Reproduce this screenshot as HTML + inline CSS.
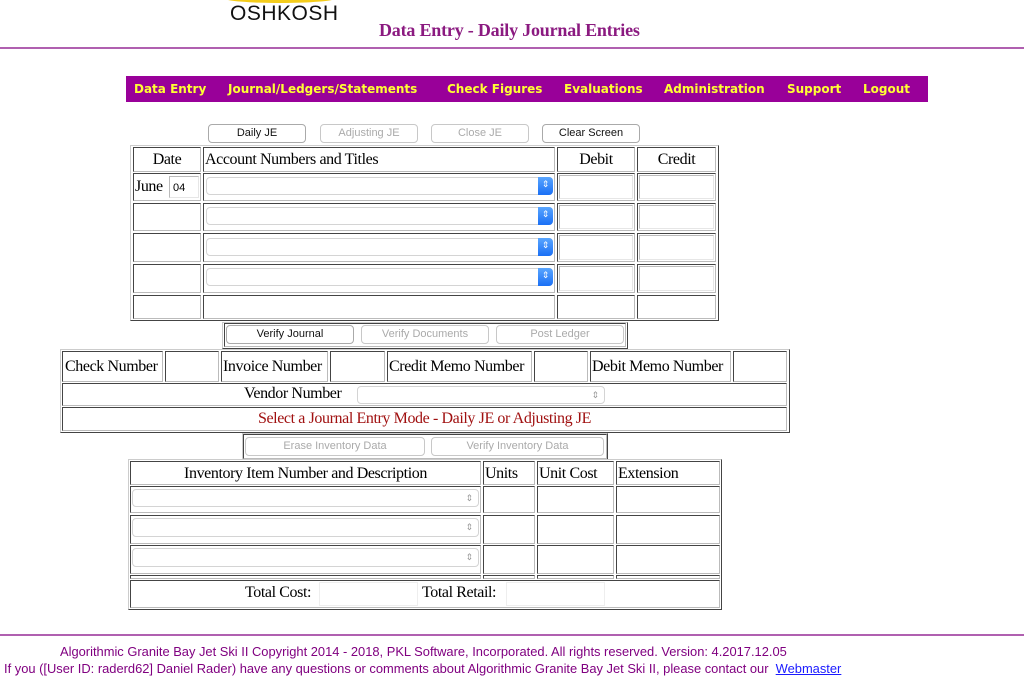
<!DOCTYPE html>
<html><head><meta charset="utf-8"><style>
body{margin:0;width:1024px;height:700px;background:#fff;position:relative;overflow:hidden;font-family:"Liberation Serif",serif;}
div{box-sizing:border-box;}
.a{position:absolute;white-space:nowrap;}
.c{position:absolute;border:1px solid;border-color:#444 #bbb #bbb #444;font-size:16px;color:#000;line-height:1;white-space:nowrap;letter-spacing:-0.4px;}
.o{position:absolute;border:1px solid;border-color:#ccc #444 #444 #ccc;}
.in{position:absolute;border:1px solid;border-color:#bbb #e6e6e6 #e6e6e6 #bbb;background:#fff;}
.btn{position:absolute;border:1px solid #c8c8c8;border-radius:4px;background:#fff;font-family:"Liberation Sans",sans-serif;font-size:11px;text-align:center;color:#aaa;line-height:17px;}
.btn.on{color:#111;border-color:#aaa;}
.sel{position:absolute;border:1px solid #d4d4d4;border-radius:4px;background:#fff;}
.blue{position:absolute;right:-1px;top:-1px;bottom:-1px;width:15px;border-radius:0 4px 4px 0;background:linear-gradient(#5aa6ff,#1a6ff5);color:#fff;font-size:9px;text-align:center;line-height:17px;font-family:"DejaVu Sans",sans-serif;}
.ch{position:absolute;right:5px;top:0;color:#999;font-size:9px;font-family:"DejaVu Sans",sans-serif;line-height:18px;}
.nav span{position:absolute;top:6px;color:#ffff33;font-weight:bold;font-family:"DejaVu Sans",sans-serif;font-size:12px;white-space:nowrap;}
</style></head><body>
<div class="a" style="left:225px;top:-6px;width:110px;height:9px;border-radius:50%;border-bottom:3px solid #f4cc1a;"></div>
<div class="a" style="left:230px;top:2px;font-family:'Liberation Sans',sans-serif;font-size:21px;color:#111;letter-spacing:0.5px;">OSHKOSH</div>
<div class="a" style="left:379px;top:20px;font-size:18px;font-weight:bold;color:#8b1a80;letter-spacing:-0.2px;">Data Entry - Daily Journal Entries</div>
<div class="a" style="left:0;top:47px;width:1024px;height:2px;background:#b060b0;"></div>

<div class="a nav" style="left:126px;top:76px;width:802px;height:26px;background:#990099;">
<span style="left:8px">Data Entry</span><span style="left:102px">Journal/Ledgers/Statements</span><span style="left:321px">Check Figures</span><span style="left:438px">Evaluations</span><span style="left:538px">Administration</span><span style="left:661px">Support</span><span style="left:737px">Logout</span>
</div>

<div class="btn on" style="left:208px;top:124px;width:98px;height:19px;">Daily JE</div>
<div class="btn" style="left:320px;top:124px;width:98px;height:19px;">Adjusting JE</div>
<div class="btn" style="left:431px;top:124px;width:98px;height:19px;">Close JE</div>
<div class="btn on" style="left:542px;top:124px;width:98px;height:19px;">Clear Screen</div>

<!-- Table 1 -->
<div class="o" style="left:130px;top:145px;width:589px;height:176px;"></div>
<div class="c" style="left:133px;top:147px;width:68px;height:25px;text-align:center;padding-top:4px;">Date</div>
<div class="c" style="left:203px;top:147px;width:352px;height:25px;padding:4px 0 0 1px;">Account Numbers and Titles</div>
<div class="c" style="left:557px;top:147px;width:78px;height:25px;text-align:center;padding-top:4px;">Debit</div>
<div class="c" style="left:637px;top:147px;width:79px;height:25px;text-align:center;padding-top:4px;">Credit</div>

<div class="c" style="left:133px;top:173px;width:68px;height:28px;padding:5px 0 0 1px;">June</div>
<div class="in" style="left:169px;top:176px;width:30px;height:22px;font-family:'Liberation Sans',sans-serif;font-size:11px;padding:5px 0 0 3px;">04</div>
<div class="c" style="left:203px;top:173px;width:352px;height:28px;"></div>
<div class="sel" style="left:206px;top:177px;width:347px;height:18px;"><div class="blue">⇕</div></div>
<div class="c" style="left:557px;top:173px;width:78px;height:28px;"></div><div class="in" style="left:559px;top:175px;width:74px;height:24px;"></div>
<div class="c" style="left:637px;top:173px;width:79px;height:28px;"></div><div class="in" style="left:639px;top:175px;width:75px;height:24px;"></div>

<div class="c" style="left:133px;top:203px;width:68px;height:28px;"></div>
<div class="c" style="left:203px;top:203px;width:352px;height:28px;"></div>
<div class="sel" style="left:206px;top:207px;width:347px;height:18px;"><div class="blue">⇕</div></div>
<div class="c" style="left:557px;top:203px;width:78px;height:28px;"></div><div class="in" style="left:559px;top:205px;width:74px;height:24px;"></div>
<div class="c" style="left:637px;top:203px;width:79px;height:28px;"></div><div class="in" style="left:639px;top:205px;width:75px;height:24px;"></div>

<div class="c" style="left:133px;top:233px;width:68px;height:29px;"></div>
<div class="c" style="left:203px;top:233px;width:352px;height:29px;"></div>
<div class="sel" style="left:206px;top:238px;width:347px;height:18px;"><div class="blue">⇕</div></div>
<div class="c" style="left:557px;top:233px;width:78px;height:29px;"></div><div class="in" style="left:559px;top:235px;width:74px;height:25px;"></div>
<div class="c" style="left:637px;top:233px;width:79px;height:29px;"></div><div class="in" style="left:639px;top:235px;width:75px;height:25px;"></div>

<div class="c" style="left:133px;top:264px;width:68px;height:29px;"></div>
<div class="c" style="left:203px;top:264px;width:352px;height:29px;"></div>
<div class="sel" style="left:206px;top:268px;width:347px;height:18px;"><div class="blue">⇕</div></div>
<div class="c" style="left:557px;top:264px;width:78px;height:29px;"></div><div class="in" style="left:559px;top:266px;width:74px;height:25px;"></div>
<div class="c" style="left:637px;top:264px;width:79px;height:29px;"></div><div class="in" style="left:639px;top:266px;width:75px;height:25px;"></div>

<div class="c" style="left:133px;top:295px;width:68px;height:24px;"></div>
<div class="c" style="left:203px;top:295px;width:352px;height:24px;"></div>
<div class="c" style="left:557px;top:295px;width:78px;height:24px;"></div>
<div class="c" style="left:637px;top:295px;width:79px;height:24px;"></div>

<!-- Verify box -->
<div class="o" style="left:222px;top:322px;width:406px;height:27px;"></div>
<div class="c" style="left:224px;top:323px;width:402px;height:24px;"></div>
<div class="btn on" style="left:226px;top:325px;width:128px;height:19px;">Verify Journal</div>
<div class="btn" style="left:361px;top:325px;width:128px;height:19px;">Verify Documents</div>
<div class="btn" style="left:496px;top:325px;width:128px;height:19px;">Post Ledger</div>

<!-- Table 2 -->
<div class="o" style="left:60px;top:349px;width:730px;height:84px;"></div>
<div class="c" style="left:62px;top:351px;width:101px;height:31px;padding:7px 0 0 2px;">Check Number</div>
<div class="c" style="left:165px;top:351px;width:54px;height:31px;"></div>
<div class="c" style="left:221px;top:351px;width:107px;height:31px;padding:7px 0 0 1px;">Invoice Number</div>
<div class="c" style="left:330px;top:351px;width:55px;height:31px;"></div>
<div class="c" style="left:387px;top:351px;width:145px;height:31px;padding:7px 0 0 1px;">Credit Memo Number</div>
<div class="c" style="left:534px;top:351px;width:54px;height:31px;"></div>
<div class="c" style="left:590px;top:351px;width:141px;height:31px;padding:7px 0 0 1px;">Debit Memo Number</div>
<div class="c" style="left:733px;top:351px;width:54px;height:31px;"></div>
<div class="c" style="left:62px;top:383px;width:725px;height:23px;"></div>
<div class="a" style="left:244px;top:385px;font-size:16px;letter-spacing:-0.4px;">Vendor Number</div>
<div class="sel" style="left:357px;top:386px;width:248px;height:18px;"><div class="ch">⇕</div></div>
<div class="c" style="left:62px;top:407px;width:725px;height:24px;text-align:center;color:#a01010;padding-top:3px;">Select a Journal Entry Mode - Daily JE or Adjusting JE</div>

<!-- Inventory buttons -->
<div class="o" style="left:242px;top:433px;width:366px;height:27px;"></div>
<div class="c" style="left:243px;top:434px;width:364px;height:25px;"></div>
<div class="btn" style="left:245px;top:437px;width:180px;height:19px;">Erase Inventory Data</div>
<div class="btn" style="left:431px;top:437px;width:173px;height:19px;">Verify Inventory Data</div>

<!-- Table 3 -->
<div class="o" style="left:128px;top:459px;width:594px;height:151px;"></div>
<div class="c" style="left:130px;top:461px;width:351px;height:24px;text-align:center;padding-top:4px;">Inventory Item Number and Description</div>
<div class="c" style="left:483px;top:461px;width:52px;height:24px;padding:4px 0 0 1px;">Units</div>
<div class="c" style="left:537px;top:461px;width:77px;height:24px;padding:4px 0 0 1px;">Unit Cost</div>
<div class="c" style="left:616px;top:461px;width:104px;height:24px;padding:4px 0 0 1px;">Extension</div>

<div class="c" style="left:130px;top:486px;width:351px;height:27px;"></div><div class="sel" style="left:132px;top:489px;width:347px;height:18px;"><div class="ch">⇕</div></div>
<div class="c" style="left:483px;top:486px;width:52px;height:27px;"></div>
<div class="c" style="left:537px;top:486px;width:77px;height:27px;"></div>
<div class="c" style="left:616px;top:486px;width:104px;height:27px;"></div>

<div class="c" style="left:130px;top:515px;width:351px;height:29px;"></div><div class="sel" style="left:132px;top:518px;width:347px;height:19px;"><div class="ch">⇕</div></div>
<div class="c" style="left:483px;top:515px;width:52px;height:29px;"></div>
<div class="c" style="left:537px;top:515px;width:77px;height:29px;"></div>
<div class="c" style="left:616px;top:515px;width:104px;height:29px;"></div>

<div class="c" style="left:130px;top:545px;width:351px;height:29px;"></div><div class="sel" style="left:132px;top:548px;width:347px;height:19px;"><div class="ch">⇕</div></div>
<div class="c" style="left:483px;top:545px;width:52px;height:29px;"></div>
<div class="c" style="left:537px;top:545px;width:77px;height:29px;"></div>
<div class="c" style="left:616px;top:545px;width:104px;height:29px;"></div>

<div class="c" style="left:130px;top:575px;width:351px;height:4px;"></div>
<div class="c" style="left:483px;top:575px;width:52px;height:4px;"></div>
<div class="c" style="left:537px;top:575px;width:77px;height:4px;"></div>
<div class="c" style="left:616px;top:575px;width:104px;height:4px;"></div>

<div class="c" style="left:130px;top:580px;width:590px;height:28px;"></div>
<div class="a" style="left:245px;top:584px;font-size:16px;letter-spacing:-0.4px;">Total Cost:</div>
<div class="in" style="left:319px;top:582px;width:99px;height:24px;border-color:#eee;"></div>
<div class="a" style="left:422px;top:584px;font-size:16px;letter-spacing:-0.4px;">Total Retail:</div>
<div class="in" style="left:506px;top:582px;width:99px;height:24px;border-color:#eee;"></div>

<div class="a" style="left:0;top:634px;width:1024px;height:2px;background:#b060b0;"></div>
<div class="a" style="left:60px;top:644px;font-family:'Liberation Sans',sans-serif;font-size:12.9px;color:#800080;">Algorithmic Granite Bay Jet Ski II Copyright 2014 - 2018, PKL Software, Incorporated. All rights reserved. Version: 4.2017.12.05</div>
<div class="a" style="left:4px;top:661px;font-family:'Liberation Sans',sans-serif;font-size:12.9px;color:#800080;">If you ([User ID: raderd62] Daniel Rader) have any questions or comments about Algorithmic Granite Bay Jet Ski II, please contact our&nbsp; <span style="color:#1a1aff;text-decoration:underline;">Webmaster</span></div>
</body></html>
